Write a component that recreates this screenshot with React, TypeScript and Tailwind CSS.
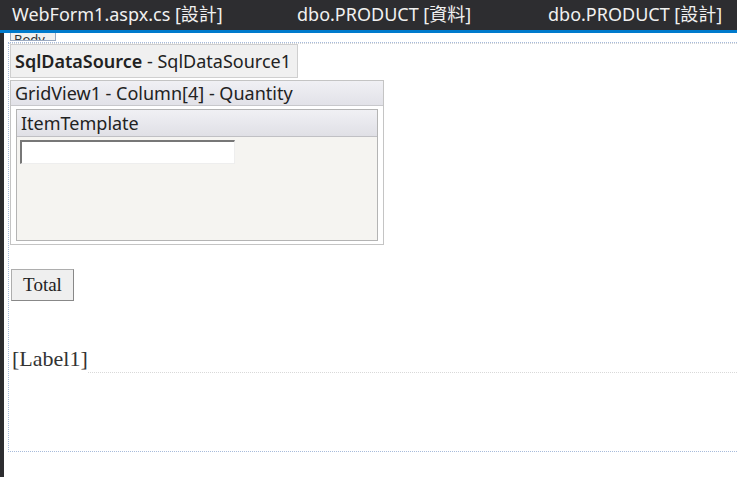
const ui = '"Noto Sans", "Noto Sans CJK TC", sans-serif';
const serif = '"Liberation Serif", "Times New Roman", serif';

export default function App() {
  return (
    <div className="flex h-[477px] w-[737px] flex-col overflow-hidden bg-white" style={{ fontFamily: ui }}>
      <div className="flex h-[33px] shrink-0 items-start border-b-[3px] border-[#007acc] bg-[#2d2d30] pl-[12px] pt-[3px] text-[18px] leading-[22px] text-[#f1f1f1]">
        <span className="w-[285px] whitespace-nowrap">WebForm1.aspx.cs [設計]</span>
        <span className="w-[251px] whitespace-nowrap">dbo.PRODUCT [資料]</span>
        <span className="whitespace-nowrap">dbo.PRODUCT [設計]</span>
      </div>

      <div className="flex flex-1">
        <div className="w-[4px] bg-[#2d2d30]" />
        <div className="relative flex-1 pl-[4px]">
          <div className="absolute left-[6px] top-0 flex h-[8px] w-[46px] items-end overflow-hidden border-x border-b border-[#9aa9bf] bg-[#f0f0f0]">
            <span className="pl-[3px] text-[13px] leading-[14px] text-[#333]" style={{ marginBottom: -6 }}>Body</span>
          </div>

          <div className="mt-[9px] h-[410px] border-l border-t border-b border-dotted border-[#a7bbdb]">
            <div className="border-t border-dotted border-[#d6d6d6] pl-[1px]">
              <div className="inline-flex h-[34px] items-center border border-[#cfcfcf] bg-[#f0f0f0] pl-[4px] pr-[6px] text-[18px] text-[#222]">
                <span className="font-semibold">SqlDataSource</span>
                <span>&nbsp;- SqlDataSource1</span>
              </div>

              <div className="mt-[2px] w-[374px] border border-[#c4c4c4] bg-white">
                <div className="h-[25px] border-b border-[#c8c8cc] bg-gradient-to-b from-[#f0f0f4] to-[#e2e2e8] pl-[4px] text-[18px] leading-[24px] text-[#222]">
                  GridView1 - Column[4] - Quantity
                </div>
                <div className="mx-[5px] mb-[3px] mt-[3px] border border-[#b4b4b4] bg-[#f5f4f1]">
                  <div className="h-[27px] border-b border-[#c0c0c4] bg-gradient-to-b from-[#f0f0f4] to-[#e0e0e6] pl-[4px] text-[18px] leading-[26px] text-[#222]">
                    ItemTemplate
                  </div>
                  <div className="h-[103px] pl-[3px] pt-[3px]">
                    <div className="h-[24px] w-[215px] border-l-2 border-t-2 border-b border-r border-l-[#777] border-t-[#777] border-b-[#eee] border-r-[#eee] bg-white" />
                  </div>
                </div>
              </div>

              <button
                className="ml-[1px] mt-[24px] h-[32px] w-[63px] border border-[#adadad] border-b-[#888] border-r-[#888] bg-[#efefef] text-[19px] text-[#222]"
                style={{ fontFamily: serif }}
              >
                Total
              </button>

              <div className="mt-[44px] flex items-end">
                <span className="pl-[2px] text-[22px] leading-[28px] text-[#333]" style={{ fontFamily: serif }}>
                  [Label1]
                </span>
                <div className="flex-1 border-b border-dotted border-[#d9d9d9]" />
              </div>
            </div>
          </div>
        </div>
      </div>
    </div>
  );
}
